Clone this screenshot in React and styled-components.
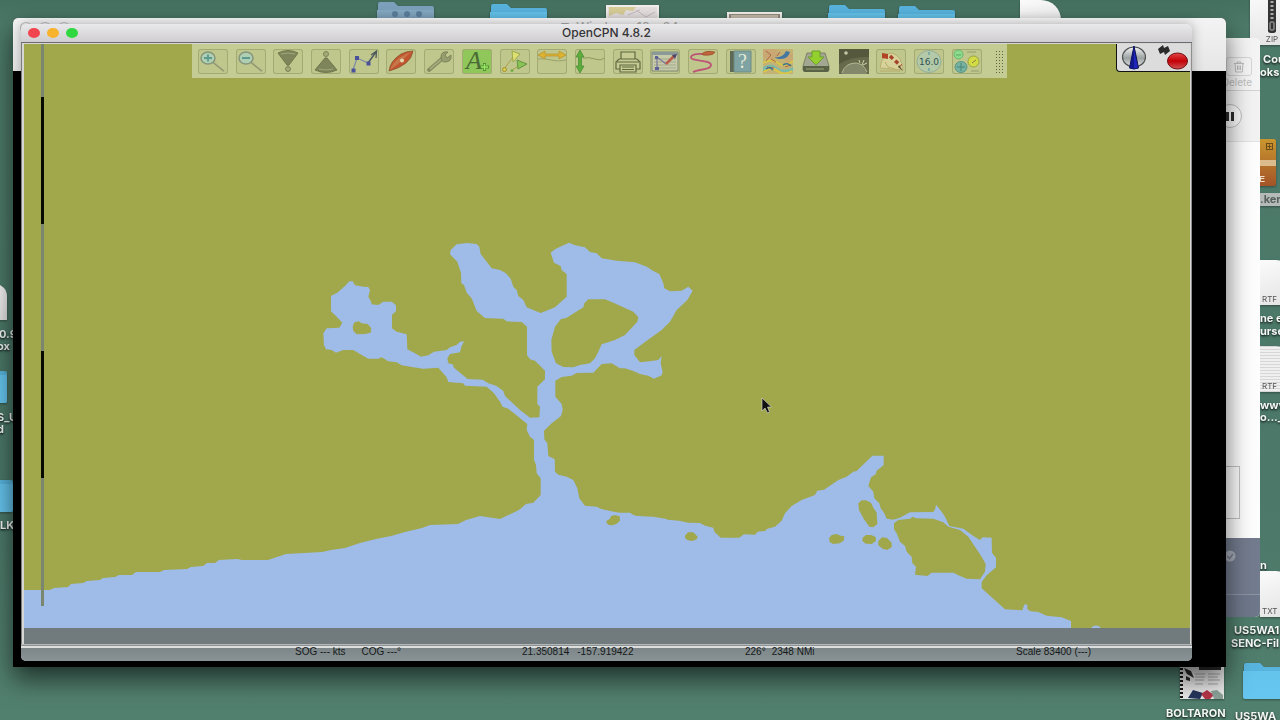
import React from 'react'
import styled, { createGlobalStyle, css } from 'styled-components'

const TOOLS = [
  { name: 'Zoom in', icon: <ZoomIcon plus /> },
  { name: 'Zoom out', icon: <ZoomIcon /> },
  { name: 'Larger scale chart', icon: <ScaleInIcon /> },
  { name: 'Smaller scale chart', icon: <ScaleOutIcon /> },
  { name: 'Create route', icon: <RouteIcon /> },
  { name: 'Auto follow', icon: <BoatIcon /> },
  { name: 'Options', icon: <WrenchIcon /> },
  { name: 'Show ENC text', icon: <TextIcon />, active: true },
  { name: 'Show AIS targets', icon: <AisIcon /> },
  { name: 'Show currents', icon: <CurrentsIcon /> },
  { name: 'Show tides', icon: <TidesIcon /> },
  { name: 'Print chart', icon: <PrintIcon /> },
  { name: 'Route manager', icon: <ManagerIcon /> },
  { name: 'Toggle tracking', icon: <TrackIcon /> },
  { name: 'About OpenCPN', icon: <HelpIcon /> },
  { name: 'GRIB weather', icon: <WeatherIcon />, bare: true },
  { name: 'Chart downloader', icon: <DownloadIcon />, bare: true },
  { name: 'Celestial navigation', icon: <PlanetIcon />, bare: true },
  { name: 'World magnetic map', icon: <DraftIcon /> },
  { name: 'Variation', icon: <VariationIcon /> },
  { name: 'Dashboard', icon: <DashboardIcon /> },
]

const App = () => {
  return (
    <>
      <GlobalStyle />
      <Desktop>
        <Shortcuts />
        <MailWindow />
        <MachineWindow>
          <MachineTitle>
            <Lights>
              <GhostLight />
              <GhostLight />
              <GhostLight />
            </Lights>
            <MachineName>
              <svg width="12" height="12" viewBox="0 0 12 12" fill="none" stroke="#a9a9a9">
                <path d="M1.500 2.500h7v8h-7zM3.500 4.500h7v6" />
              </svg>
              Windows 10 x64
            </MachineName>
          </MachineTitle>
          <MachineScreen />
        </MachineWindow>
        <MainWindow>
          <TitleBar>
            <Lights>
              <Light $color="#f0444e" aria-label="Close" />
              <Light $color="#f8b32d" aria-label="Minimize" />
              <Light $color="#2fd840" aria-label="Zoom" />
            </Lights>
            <Title>OpenCPN 4.8.2</Title>
          </TitleBar>
          <Frame>
            <Chart>
              <ChartDrawing />
              <ScaleBar>
                <ScaleStep $size={53} />
                <ScaleStep $size={127} $dark />
                <ScaleStep $size={127} />
                <ScaleStep $size={127} $dark />
                <ScaleStep $size={128} />
              </ScaleBar>
              <Toolbar>
                <ToolList>
                  {TOOLS.map((tool) => (
                    <ToolButton key={tool.name} aria-label={tool.name} $active={tool.active} $bare={tool.bare}>
                      {tool.icon}
                    </ToolButton>
                  ))}
                </ToolList>
                <Grip />
              </Toolbar>
              <CompassPanel>
                <CompassIcon />
                <GpsIcon />
              </CompassPanel>
            </Chart>
            <ChartStrip />
          </Frame>
          <StatusBar>
            <StatusField />
            <StatusField $gap={16}>
              <span>SOG --- kts</span>
              <span>COG ---°</span>
            </StatusField>
            <StatusField $gap={8}>
              <span>21.350814</span>
              <span>-157.919422</span>
            </StatusField>
            <StatusField $gap={6}>
              <span>226°</span>
              <span>2348 NMi</span>
            </StatusField>
            <StatusField>
              <span>Scale 83400 (---)</span>
            </StatusField>
          </StatusBar>
        </MainWindow>
      </Desktop>
    </>
  )
}

export default App

/* Desktop */

function Shortcuts() {
  return (
    <>
      <Item $x={377} $y={1}><FolderIcon group /></Item>
      <Item $x={490} $y={3}><FolderIcon /></Item>
      <Item $x={606} $y={5}><MapThumb /></Item>
      <Item $x={727} $y={12}><PhotoThumb /></Item>
      <RightItem $x={452} $y={4}><FolderIcon /></RightItem>
      <RightItem $x={382} $y={5}><FolderIcon /></RightItem>
      <RightItem $x={260} $y={0}><Sheet $w={41} $h={50} $fold={20} /></RightItem>

      <RightItem $x={30} $y={-8}><Sheet $w={44} $h={53}><ZipPull /><Kind>ZIP</Kind></Sheet></RightItem>
      <RightItem $x={17} $y={53}><Label>Cou</Label></RightItem>
      <RightItem $x={20} $y={66}><Label>oks</Label></RightItem>
      <RightItem $x={30} $y={139}><BoxIcon /></RightItem>
      <RightItem $x={20} $y={193}><Label $selected>.ker</Label></RightItem>
      <RightItem $x={20} $y={260}><Sheet $w={36} $h={45} $fold={20}><Kind>RTF</Kind></Sheet></RightItem>
      <RightItem $x={20} $y={312}><Label>ne e</Label></RightItem>
      <RightItem $x={20} $y={325}><Label>urse</Label></RightItem>
      <RightItem $x={20} $y={346}><Sheet $w={36} $h={46} $fold={20} $lined><Kind>RTF</Kind></Sheet></RightItem>
      <RightItem $x={20} $y={399}><Label>www</Label></RightItem>
      <RightItem $x={20} $y={411}><Label>o..._5</Label></RightItem>
      <RightItem $x={20} $y={559}><Label>n</Label></RightItem>
      <RightItem $x={20} $y={571}><Sheet $w={36} $h={46} $fold={20}><Kind>TXT</Kind></Sheet></RightItem>
      <RightItem $x={46} $y={624}><Label>US5WA1</Label></RightItem>
      <RightItem $x={49} $y={637}><Label>SENC-Fil</Label></RightItem>
      <RightItem $x={101} $y={660}><CatalogThumb /></RightItem>
      <RightItem $x={37} $y={662}><FolderIcon /></RightItem>
      <RightItem $x={114} $y={707}><Label>BOLTARON</Label></RightItem>
      <RightItem $x={45} $y={710}><Label>US5WA</Label></RightItem>

      <Item $x={-34} $y={284}><Sheet $w={41} $h={36} $fold={12} /></Item>
      <Item $x={-1} $y={328}><Label>0.9</Label></Item>
      <Item $x={-3} $y={340}><Label>ox</Label></Item>
      <Item $x={-50} $y={366}><FolderIcon /></Item>
      <Item $x={-3} $y={411}><Label>S_U</Label></Item>
      <Item $x={-3} $y={423}><Label>d</Label></Item>
      <Item $x={-44} $y={475}><FolderIcon /></Item>
      <Item $x={0} $y={519}><Label>LK</Label></Item>
    </>
  )
}

function MailWindow() {
  return (
    <Mail>
      <MailTools>
        <DeleteButton>
          <DeleteBox>
            <svg width="12" height="12" viewBox="0 0 12 12" fill="none" stroke="#bcbcbc">
              <path d="M1 2.500h10M4 2.500V1h4v1.500M2 2.500l.7 8.500h6.600L10 2.500M4.500 4.500v4.500M6 4.500v4.500M7.500 4.500v4.500" />
            </svg>
          </DeleteBox>
          Delete
        </DeleteButton>
      </MailTools>
      <MailActivity>
        <PauseButton aria-label="Pause">
          <svg width="22" height="22" viewBox="0 0 22 22">
            <path d="M7 7h3v9H7zM12 7h3v9h-3z" fill="#2c2c2c" />
          </svg>
        </PauseButton>
      </MailActivity>
      <MailBody>
        <MailBox />
      </MailBody>
      <MailFooter>
        <svg width="12" height="12" viewBox="0 0 12 12">
          <circle cx="6" cy="6" r="5.500" fill="#a9adb8" />
          <path d="M3 6l2.500 2.500L9 4" fill="none" stroke="#777e90" strokeWidth="1.500" />
        </svg>
      </MailFooter>
      <MailBase />
    </Mail>
  )
}

function FolderIcon({ group }) {
  const id = group ? 'folderGroup' : 'folderPlain'
  return (
    <svg width="58" height="38" viewBox="0 0 58 38">
      <defs>
        <linearGradient id={id} x1="0" y1="0" x2="0" y2="1">
          <stop offset="0" stopColor={group ? '#86abc4' : '#64c4ec'} />
          <stop offset="1" stopColor={group ? '#7298b4' : '#66c6f0'} />
        </linearGradient>
      </defs>
      <path d="M1 8V3q0-2 2-2h14l4 4h34q2 0 2 2v28q0 2-2 2H3q-2 0-2-2z" fill={group ? '#7da2bd' : '#58b4de'} />
      <path d="M0 9h57v26q0 2-2 2H2q-2 0-2-2z" fill={`url(#${id})`} />
      {group && (
        <g fill="#5e819f">
          <circle cx="18" cy="13" r="3" /><circle cx="30" cy="13" r="3" /><circle cx="42" cy="13" r="3" />
        </g>
      )}
    </svg>
  )
}

function MapThumb() {
  return (
    <svg width="54" height="40" viewBox="0 0 54 40">
      <path fill="#f2efec" d="M0 0h53v40H0z" />
      <path fill="#e7e1e2" d="M2 2h49v38H2z" />
      <path fill="#d9cf98" d="M3 2h27l-3 4-7-1-3 5-7-2-7 3z" />
      <path d="M22 10l12-5M30 5l10 7 9-5" stroke="#c9bdc3" fill="none" />
    </svg>
  )
}

function PhotoThumb() {
  return (
    <svg width="55" height="20" viewBox="0 0 55 20">
      <path fill="#f4f3f0" d="M0 0h55v20H0z" />
      <path fill="#978d81" d="M2 2h51v18H2z" />
      <path fill="#c8beae" d="M4 3h47v17H4z" />
    </svg>
  )
}

function CatalogThumb() {
  return (
    <svg width="46" height="40" viewBox="0 0 46 40">
      <path fill="#e9e9ea" d="M1 0h44v39H1z" />
      <path fill="none" stroke="#161616" strokeWidth="3" strokeDasharray="2 2" d="M2.500 0v39" />
      <path fill="#2b2b2b" d="M20 6h22v4H20zM5 8l7 3 3 7-7-4zM7 16l4 2v3l-4-1z" />
      <path stroke="#a8a8aa" d="M16 14h10M16 17h10M16 20h9M29 14h12M29 17h10M29 20h12M16 24h8M29 24h10" />
      <path fill="#26355c" d="M9 38l5-8 10 3-3 6z" />
      <path fill="#b53649" d="M22 34l6-4 7 5-4 4h-5z" />
      <path fill="#8ba197" d="M32 31l6-1 6 5v4h-9z" />
    </svg>
  )
}

function ZipPull() {
  return (
    <svg width="18" height="34" viewBox="0 0 18 34">
      <path d="M5 0h8v31q0 2-4 2t-4-2z" fill="#343434" />
      <path d="M9 1v18" stroke="#aaa" strokeWidth="3" strokeDasharray="2 2" />
      <rect x="7" y="22" width="4" height="8" rx="1" fill="none" stroke="#b5b5b5" />
    </svg>
  )
}

function BoxIcon() {
  return (
    <svg width="27" height="48" viewBox="0 0 27 48">
      <defs>
        <linearGradient id="box" x1="0" y1="0" x2="0" y2="1">
          <stop offset="0" stopColor="#c9962f" />
          <stop offset="1" stopColor="#a45427" />
        </linearGradient>
      </defs>
      <rect width="26" height="47" rx="2" fill="url(#box)" />
      <path d="M0 21h26v6H0z" fill="#dcbc8c" />
      <rect x="16.500" y="4.500" width="6" height="6" fill="none" stroke="#6b4b17" />
      <path d="M19.500 5.500v4M17.500 7.500h4" stroke="#6b4b17" />
      <text x="9" y="43" fontFamily="Liberation Sans, sans-serif" fontSize="9" fontWeight="700" fill="#eee0cc">E</text>
    </svg>
  )
}

/* Chart */

function ChartDrawing() {
  return (
    <ChartSvg viewBox="24 44 1166 584" preserveAspectRatio="xMidYMid slice">
      <path fill="#a1a84b" d="M0 0h1400v800H0z" />
      <path
        fill="#9fbbe8"
        d="M24 590H50L54 588L68 587L71 584L83 583L87 581L100 580L103 578L115 577L119 575L132 575L136 572L160 572L164 570L187 569L191 567L203 566L207 563L215 563L219 560L237 559L242 560L268 560L274 558L286 554L322 552L331 550L345 548L360 543L376 539L391 536L405 532L422 528L430 525L458 524L466 520L480 516L500 519L540 500L595 508L620 513L650 518L681 521V700H24z"
      />
      <g transform="translate(300 220) scale(.33333)">
        <path
          fill="#9fbbe8"
          d="M590 900L615 895 640 886 660 868 678 852 700 848 722 825 722 775 710 760 708 735 702 720 702 660 690 650 680 630 682 612 625 566 608 560 600 545 582 520 560 500 495 497 490 490 445 486 440 472 415 443 370 446 340 442 305 436 290 427 265 424 245 412 235 416 205 416 180 402 160 390 130 390 108 398 95 390 78 388 72 375 70 340 80 325 118 323 127 308 110 290 93 274 93 228 112 218 135 198 148 184 158 184 165 196 190 200 205 201 210 210 205 230 212 242 215 253 235 255 250 245 275 245 288 256 288 274 276 284 276 325 290 335 320 343 322 388 345 400 363 410 385 406 402 395 440 390 450 382 470 375 480 365 492 364 484 380 480 397 450 402 442 415 445 430 458 433 462 443 503 477 548 479 565 490 590 498 610 513 615 528 660 570 690 593 718 592 720 560 712 552 712 500 735 478 735 452 705 422 690 418 681 405 681 320 665 306 620 304 610 296 555 294 530 273 515 235 500 218 492 195 484 190 483 158 472 125 450 103 452 90 470 73 500 69 530 72 538 80 542 102 560 125 575 145 600 150 618 160 632 176 640 200 650 210 655 228 670 240 680 262 705 272 722 279 745 270 765 262 800 230 800 162 785 150 782 138 762 128 752 98 765 88 790 76 808 68 825 76 855 82 870 96 890 100 905 115 950 122 1005 127 1040 140 1060 153 1078 162 1090 190 1093 205 1110 214 1145 212 1165 200 1178 212 1162 240 1130 270 1110 305 1085 330 1040 362 1003 390 1003 405 1020 427 1050 424 1075 420 1085 408 1082 430 1088 455 1085 466 1062 476 1045 467 1020 462 1000 453 975 445 960 445 935 430 905 432 880 458 830 459 815 467 785 471 766 482 766 530 785 552 788 570 783 588 755 610 732 632 733 658 742 670 745 708 764 718 765 755 775 764 800 770 820 780 832 805 838 835 855 857 890 860 905 868 950 878 990 878 1005 888 1060 890 1100 897V960H590z"
        />
        <g fill="#a1a84b">
          <path d="M158 320L163 307 177 304 185 310 203 312 214 325 212 338 195 342 170 343 160 333z" />
          <path d="M768 430L755 395 754 360 765 320 782 298 800 293 850 262 853 250 865 238 915 238 940 248 1000 275 1015 292 1012 305 975 345 945 360 905 373 895 395 885 415 870 430 840 435 820 442 790 441z" />
          <path d="M918 904l12-8 3-8 12-3 14 4 1 13-10 9-12 5-14-2z" />
        </g>
      </g>
      <g transform="translate(680 440) scale(.33333)">
        <path
          fill="#9fbbe8"
          d="M0 243L25 248 60 249 75 257 100 263 103 275 122 293 178 293 192 283 225 284 233 275 255 273 262 266 285 260 305 242 315 220 335 198 365 180 405 165 412 152 432 149 475 120 500 110 520 95 530 93 577 47 611 47 611 75 590 92 587 103 573 112 565 138 580 155 583 175 598 190 602 205 612 218 620 236 640 239 660 233 690 217 760 216 766 206 768 194 785 215 795 230 808 258 850 266 880 288 900 300 908 292 935 293 936 338 948 354 948 382 920 406 905 426 905 445 975 508 1027 511 1034 492 1042 495 1042 508 1052 514 1075 516 1100 527 1145 532 1173 543 1175 800H0zM1235 561l8-4h10l8 4v8h-26z"
        />
        <g fill="#a1a84b">
          <path d="M642 250L655 240 690 236 698 230 708 235 760 236 790 247 805 260 840 270 865 290 885 320 905 350 917 372 915 395 900 418 860 416 840 408 820 398 755 398 742 408 705 404 708 380 697 370 695 350 680 335 675 318 660 305 650 280 642 268z" />
          <path d="M535 190L545 181 558 181 573 188 580 203 590 218 592 252 580 262 568 260 552 238 537 210z" />
          <path d="M447 295l8-10 15-3 12 5 11 2-2 13-12 8-20 2-10-6z" />
          <path d="M548 293l10-8 15 0 14 6 1 11-13 10-18-1-10-8z" />
          <path d="M595 303l11-11 15 2 14 14 0 14-14 8-13-4-13-10z" />
          <path d="M15 287l9-10 16 0 13 13-3 8-13 5-14-2-8-7z" />
        </g>
      </g>
      <path d="M762 398v13l3-3 2.500 5 2-1-2-5h4z" fill="#111" stroke="#ddd" strokeWidth=".6" />
    </ChartSvg>
  )
}

/* Tool drawings, all on a 30 x 25 board */

function Board({ children }) {
  return <svg width="30" height="25" viewBox="0 0 30 25" fill="none">{children}</svg>
}

function ZoomIcon({ plus }) {
  return (
    <Board>
      <path d="M15 13l11 9" stroke="#8e956a" strokeWidth="2" />
      <path d="M16 13l10 8" stroke="#c5c9a2" strokeWidth=".8" />
      <ellipse cx="10" cy="9" rx="7" ry="6" fill="#b0cfb2" stroke="#84957a" strokeWidth="1.500" />
      <path d={plus ? 'M6 9h8M10 5.500v7' : 'M6 9h8'} stroke="#5a9a90" strokeWidth="1.800" />
    </Board>
  )
}

function ScaleInIcon() {
  return (
    <Board>
      <path d="M5 4q10-5 20 0l-9 12h-2z" fill="#7e855a" stroke="#70774c" />
      <path d="M8 5q7-2 14 0" stroke="#a0a777" />
      <circle cx="15" cy="20" r="2.500" fill="#a4aa75" stroke="#7c8358" />
      <path d="M15 16v2" stroke="#7c8358" />
    </Board>
  )
}

function ScaleOutIcon() {
  return (
    <Board>
      <circle cx="15" cy="5" r="2.500" fill="#a4aa75" stroke="#7c8358" />
      <path d="M14 9h2l10 12q-11 5-22 0z" fill="#7e855a" stroke="#70774c" />
      <path d="M8 20q7 2 14 0" stroke="#a0a777" />
    </Board>
  )
}

function RouteIcon() {
  return (
    <Board>
      <path d="M4 21L8 9l11 5 8-11" stroke="#7e88a8" strokeWidth="1.200" />
      <path d="M19 14l8-11M22 6l5.500-4-.5 7" stroke="#4c5a5a" strokeWidth="1.300" />
      <path d="M2.500 19.500h4v4h-4zM6 7h4v4H6zM17.500 12.500h4v4h-4z" fill="#4b529b" />
    </Board>
  )
}

function BoatIcon() {
  return (
    <Board>
      <path d="M3 22Q4 12 15 5q6-3 12-3-1 7-7 12-6 5-17 8z" fill="#c2542f" stroke="#8a5831" strokeWidth=".8" />
      <path d="M4 21Q8 9 25 3L12 15z" fill="#c6774a" />
      <circle cx="16" cy="11.500" r="2" fill="#e3d9b0" />
    </Board>
  )
}

function WrenchIcon() {
  return (
    <Board>
      <path d="M5 21L19 9" stroke="#868d61" strokeWidth="4" strokeLinecap="round" />
      <path d="M6 20L19 9" stroke="#abb182" strokeWidth="1.500" />
      <path d="M17 8q0-6 7-5l-3 3 2 3 4-3q1 7-6 7-4 0-4-5z" fill="#969d6e" stroke="#7d8459" />
    </Board>
  )
}

function TextIcon() {
  return (
    <Board>
      <text x="4" y="20" fontFamily="Liberation Serif, serif" fontStyle="italic" fontSize="26" fill="#4a6b35">A</text>
      <path d="M22.500 14v8M18 18h9" stroke="#4f912e" strokeWidth="3" />
      <path d="M22.500 15v6M19 18h7" stroke="#9be569" strokeWidth="1.500" />
    </Board>
  )
}

function AisIcon() {
  return (
    <Board>
      <path d="M4 20L13 8M12 21l8-5" stroke="#a8a04c" />
      <path d="M12 2l8 3-7 8z" fill="#dde070" stroke="#9ca84c" />
      <path d="M17 11l10 4-9 5z" fill="#89c255" stroke="#649540" />
      <circle cx="4.500" cy="20.500" r="2" fill="#dace49" stroke="#a49034" />
      <circle cx="12" cy="21.500" r="1.500" fill="#78ad46" />
    </Board>
  )
}

function CurrentsIcon() {
  return (
    <Board>
      <path d="M1 10q6-1 13 1t15 0" stroke="#9aa26c" />
      <path d="M1 6l7-4v3h14V2l7 4-7 4V7H8v3z" fill="#dcb331" stroke="#b99431" strokeWidth=".8" />
    </Board>
  )
}

function TidesIcon() {
  return (
    <Board>
      <path d="M8 9q6-1 12 1t9-1" stroke="#8f975f" />
      <path d="M5 1l4 7H6.500v9H9l-4 7-4-7h2.500V8H1z" fill="#5cab3b" stroke="#4c8f38" strokeWidth=".8" />
    </Board>
  )
}

function PrintIcon() {
  return (
    <Board>
      <g fill="#c5cb92" stroke="#616840" strokeWidth="1.200">
        <path d="M8 10V3h14v7M6 10h18l3 3v7H3v-7z" />
        <path d="M7 16h16v7H7z" />
        <path d="M9 18h12M9 20.500h12M4 13h22" />
      </g>
    </Board>
  )
}

function ManagerIcon() {
  return (
    <Board>
      <path d="M2 3h26v19H2z" fill="#c8cbaa" stroke="#7d8670" />
      <path d="M2 3h26v3H2z" fill="#899a98" />
      <path d="M4 10h22M4 13h22M4 16h22M4 19h22" stroke="#a3a98f" />
      <path d="M7 20V8l9 7" stroke="#7b7a9b" strokeWidth="1.200" />
      <path d="M16 15l8-8" stroke="#bc5b4b" strokeWidth="2.500" />
      <path d="M22 6l5-1-2 5z" fill="#4e456b" />
      <path d="M5 18h4v3H5zM5 7h3v3H5z" fill="#5c6294" />
    </Board>
  )
}

function TrackIcon() {
  return (
    <Board>
      <path d="M16 5Q4 4 3 8c-1 5 20 2 20 8 0 5-12 4-18 7" stroke="#bd5577" strokeWidth="1.800" />
      <path d="M14 5q3-4 13-2-2 4-12 3z" fill="#c26439" stroke="#914b29" strokeWidth=".7" />
    </Board>
  )
}

function HelpIcon() {
  return (
    <Board>
      <path d="M4 2h4v21H4z" fill="#5f6a56" />
      <path d="M8 2h17v21H8z" fill="#7fa3a2" stroke="#6f8a82" />
      <text x="12" y="19" fontFamily="Liberation Serif, serif" fontSize="20" fill="#e4ead6">?</text>
    </Board>
  )
}

function WeatherIcon() {
  return (
    <Board>
      <path d="M0 0h30v25H0z" fill="#c3b273" />
      <path d="M0 0h12l5 6-8 5-9-3zM21 8l9-4v8l-6 3z" fill="#c9a873" />
      <path d="M12 8q8 1 11-6l4 1q-2 7-9 7-5 0-6-2z" fill="#4577a0" />
      <path d="M0 18q8-5 14 0t16 0v4q-8 4-14-1t-16 1z" fill="#7dbba8" />
      <path d="M0 14q9-5 15 0t15-2M1 23q6-6 13-1t15 0" stroke="#d8c748" strokeWidth="2" />
      <path d="M3 2l5 4-5 6M17 3l-3 4M22 18l6-2M4 18l7 1M8 10l5 3" stroke="#b0644a" />
      <path d="M20 16q5-3 8 1M3 20q4-3 7 1" stroke="#3e7393" strokeWidth="1.500" />
    </Board>
  )
}

function DownloadIcon() {
  return (
    <Board>
      <path d="M6 4h18l4 13v4q0 1-2 1H4q-2 0-2-1v-4z" fill="#a3a792" stroke="#7b8263" />
      <path d="M2 17h26v4q0 2-2 2H4q-2 0-2-2z" fill="#5a6245" />
      <path d="M5 20h18" stroke="#9ba47a" />
      <path d="M11 2h8v6h4l-8 8-8-8h4z" fill="#93d02d" stroke="#6c9f2b" />
    </Board>
  )
}

function PlanetIcon() {
  return (
    <Board>
      <path d="M0 0h30v25H0z" fill="#55583c" />
      <path d="M0 15q13-8 30-7v17H0z" fill="#686b4b" />
      <path d="M3 25Q5 15 16 14q10 1 12 11z" fill="#84886a" />
      <path d="M3 24Q6 14 17 14q8 1 11 9" stroke="#b4b793" />
      <path d="M23 16l2-5M24 16l4-2M21 14l-1-3" stroke="#d0d2ab" />
      <circle cx="7" cy="4" r="1.800" fill="#c5c6a5" />
    </Board>
  )
}

function DraftIcon() {
  return (
    <Board>
      <path d="M4 19Q6 4 16 4q10 3 11 17z" fill="#d6d29a" stroke="#b9ae70" />
      <path d="M6 4l6 1v5l-6-1z" fill="#b04425" />
      <path d="M14 7l11 10" stroke="#a8432b" strokeWidth="3.500" strokeDasharray="4 3" />
      <path d="M4 22h20M9 13l3 5 7 2" stroke="#b9ab68" />
      <path d="M23 16l4 6-5-4z" fill="#594b2e" />
    </Board>
  )
}

function VariationIcon() {
  return (
    <Board>
      <ellipse cx="15" cy="12.500" rx="12" ry="11" fill="#b4c9a8" stroke="#94ad97" />
      <path d="M15 3v3M15 19v3" stroke="#6ba3a6" strokeWidth="1.500" />
      <text x="15" y="16" textAnchor="middle" fontFamily="DejaVu Sans, sans-serif" fontSize="9" fill="#2d5353">16.0</text>
    </Board>
  )
}

function DashboardIcon() {
  return (
    <Board>
      <circle cx="6.500" cy="5.500" r="4.500" fill="#8bdc8a" stroke="#66b570" />
      <path d="M4 6h5" stroke="#63a56b" />
      <ellipse cx="21.500" cy="12.500" rx="5.500" ry="5.500" fill="#d4dc45" stroke="#96a23e" />
      <path d="M20 14l4-3" stroke="#848237" />
      <ellipse cx="9" cy="18" rx="6" ry="5.500" fill="#77b2a0" stroke="#5a9486" />
      <path d="M9 14v8M5 18h8" stroke="#47857b" />
      <path d="M15 3h9M19 22h8" stroke="#aab17c" strokeWidth="2" />
    </Board>
  )
}

function CompassIcon() {
  return (
    <svg width="26" height="26" viewBox="0 0 26 26">
      <defs>
        <linearGradient id="dial" x1="0" y1="0" x2="0" y2="1">
          <stop offset="0" stopColor="#f5f5f5" />
          <stop offset=".55" stopColor="#9ba1a1" />
          <stop offset="1" stopColor="#e6e6e6" />
        </linearGradient>
      </defs>
      <ellipse cx="13" cy="13" rx="11.500" ry="10" fill="url(#dial)" stroke="#4d5151" strokeWidth="1.200" />
      <path d="M13 2L8.500 24q4.500 2 9 0z" fill="#2025bb" stroke="#0b1257" />
      <path d="M13 2v23l-4-1z" fill="#10188a" />
    </svg>
  )
}

function GpsIcon() {
  return (
    <svg width="32" height="26" viewBox="0 0 32 26">
      <defs>
        <linearGradient id="fix" x1="0" y1="0" x2="0" y2="1">
          <stop offset="0" stopColor="#e44848" />
          <stop offset=".5" stopColor="#c30008" />
          <stop offset="1" stopColor="#d05555" />
        </linearGradient>
      </defs>
      <path d="M1 5l5-4 1 3 4-2 2 5-5 4-1-3-4 2z" fill="#2a2a2a" />
      <ellipse cx="20.500" cy="17" rx="10" ry="8" fill="url(#fix)" stroke="#6f1114" />
    </svg>
  )
}

const GlobalStyle = createGlobalStyle`
  * {
    box-sizing: border-box;
  }
  body {
    margin: 0;
    overflow: hidden;
    font-family: Inter, 'Liberation Sans', sans-serif;
  }
  button {
    padding: 0;
    border: 0;
    background: none;
    font: inherit;
  }
  svg {
    display: block;
    flex: none;
  }
`
const Desktop = styled.main`
  position: relative;
  height: 100vh;
  overflow: hidden;
  background: linear-gradient(#45705f, #4c7a69 24px, #4b7868 70%, #52806f);
`
const Item = styled.div`
  position: absolute;
  left: ${(props) => props.$x}px;
  top: ${(props) => props.$y}px;
  filter: drop-shadow(0 1px 1px rgba(0, 0, 0, 0.35));
`
const RightItem = styled(Item)`
  left: calc(100% - ${(props) => props.$x}px);
`
const Label = styled.span`
  display: block;
  font-size: 11px;
  line-height: 13px;
  font-weight: 700;
  white-space: nowrap;
  color: #f2f6f4;
  text-shadow: 0 1px 2px rgba(0, 0, 0, 0.6);
  ${(props) => props.$selected && css`
    color: #56605c;
    background: #b4bab7;
    text-shadow: none;
  `}
`
const Sheet = styled.div`
  width: ${(props) => props.$w}px;
  height: ${(props) => props.$h}px;
  display: flex;
  flex-direction: column;
  justify-content: flex-end;
  align-items: ${(props) => (props.$fold ? 'flex-start' : 'center')};
  border-top-right-radius: ${(props) => props.$fold || 0}px;
  background: ${(props) => (props.$lined
    ? 'repeating-linear-gradient(#d6d6d6 0 1px, #efefef 1px 3px)'
    : 'linear-gradient(160deg, #fbfbfb, #e2e2e2)')};
`
const Kind = styled.span`
  padding: 0 2px;
  font-size: 8px;
  line-height: 11px;
  color: #555;
`
const Window = styled.section`
  position: absolute;
  display: flex;
  flex-direction: column;
`
const Mail = styled(Window)`
  inset: 38px 20px 103px 40%;
  border-radius: 5px;
  overflow: hidden;
  background: #fdfdfd;
`
const MailTools = styled.div`
  height: 53px;
  display: flex;
  justify-content: flex-end;
  padding: 19px 8px 0 0;
  background: #f4f4f4;
  border-bottom: 1px solid #d2d2d2;
`
const DeleteButton = styled.button`
  display: flex;
  flex-direction: column;
  align-items: flex-end;
  font-size: 10px;
  line-height: 12px;
  color: #bebebe;
`
const DeleteBox = styled.span`
  width: 26px;
  height: 19px;
  display: flex;
  align-items: center;
  justify-content: center;
  border: 1px solid #d5d5d5;
  border-radius: 3px;
`
const MailActivity = styled.div`
  height: 51px;
  display: flex;
  align-items: center;
  justify-content: flex-end;
  padding-right: 18px;
  background: #f2f2f2;
  border-bottom: 1px solid #e2e2e2;
`
const PauseButton = styled.button`
  border: 1px solid #bdbdbd;
  border-radius: 50%;
  background: #fafafa;
`
const MailBody = styled.div`
  flex: 1;
  display: flex;
  align-items: flex-end;
  justify-content: flex-end;
  padding: 0 20px 19px 0;
`
const MailBox = styled.div`
  width: 80px;
  height: 53px;
  border: 1px solid #c2c2c2;
`
const MailFooter = styled.div`
  height: 56px;
  display: flex;
  justify-content: flex-end;
  padding: 12px 24px 0 0;
  background: #737b8e;
`
const MailBase = styled.div`
  height: 23px;
  background: #6f788b;
  border-top: 1px solid #8c93a3;
`
const MachineWindow = styled(Window)`
  inset: 18px 54px 53px 13px;
  border-radius: 5px 5px 0 0;
  background: #000;
  box-shadow: 0 12px 26px rgba(0, 0, 0, 0.6);
`
const MachineTitle = styled.div`
  height: 53px;
  display: grid;
  grid-template-columns: 1fr auto 1fr;
  align-items: start;
  padding-top: 1px;
  border-radius: 5px 5px 0 0;
  background: linear-gradient(#f3f3f3, #e6e6e6);
`
const MachineName = styled.span`
  display: flex;
  align-items: center;
  gap: 4px;
  font-size: 13px;
  line-height: 16px;
  color: #a9a9a9;
`
const MachineScreen = styled.div`
  flex: 1;
  background: #000;
`
const MainWindow = styled(Window)`
  inset: 24px 88px 59px 21px;
  border-radius: 5px;
  overflow: hidden;
  background: #cbcbcb;
  box-shadow: 0 0 12px rgba(0, 0, 0, 0.3);
`
const TitleBar = styled.header`
  height: 19px;
  display: grid;
  grid-template-columns: 1fr auto 1fr;
  align-items: center;
  background: linear-gradient(#e9e8ea, #cfcdd1);
  border-bottom: 1px solid #6c6b6e;
`
const Lights = styled.div`
  display: flex;
  gap: 7px;
  padding-left: 7px;
`
const Light = styled.button`
  width: 12px;
  height: 10px;
  border-radius: 50%;
  background: ${(props) => props.$color};
`
const GhostLight = styled.span`
  width: 12px;
  height: 11px;
  margin-top: 3px;
  border: 1px solid #bdbdbd;
  border-radius: 50%;
`
const Title = styled.h1`
  margin: 0;
  font-size: 12px;
  line-height: 18px;
  font-weight: 500;
  color: #343336;
`
const Frame = styled.div`
  flex: 1;
  min-height: 0;
  display: flex;
  flex-direction: column;
  padding: 1px 1px 0 2px;
  border-left: 1px solid #7d7d7d;
  border-right: 1px solid #8f8f8f;
  background: #d6d6d4;
`
const Chart = styled.div`
  position: relative;
  flex: 1;
  min-height: 0;
  overflow: hidden;
`
const ChartSvg = styled.svg`
  width: 100%;
  height: 100%;
`
const ChartStrip = styled.div`
  height: 16px;
  background: #717b7e;
`
const ScaleBar = styled.div`
  position: absolute;
  top: 0;
  left: 17px;
  width: 3px;
`
const ScaleStep = styled.div`
  height: ${(props) => props.$size}px;
  background: ${(props) => (props.$dark ? '#080a04' : '#7b866f')};
`
const Toolbar = styled.nav`
  position: absolute;
  top: 0;
  left: 168px;
  display: flex;
  align-items: center;
  gap: 13px;
  height: 34px;
  padding: 0 3px 0 6px;
  background: #c4cb93;
`
const ToolList = styled.div`
  width: 784px;
  display: flex;
  justify-content: space-between;
`
const ToolButton = styled.button`
  width: 30px;
  height: 25px;
  border-radius: 3px;
  background: ${(props) => (props.$active ? '#8fc75b' : props.$bare ? 'none' : '#c0c78d')};
  box-shadow: ${(props) => (props.$bare ? 'none' : 'inset 0 0 0 1px #a3aa74')};
`
const Grip = styled.span`
  width: 9px;
  height: 23px;
  background: radial-gradient(circle, #5c643c 1px, transparent 1px) 0 0 / 3px 3px;
`
const CompassPanel = styled.div`
  position: absolute;
  top: 0;
  right: 0;
  display: flex;
  justify-content: space-between;
  width: 74px;
  height: 28px;
  padding: 0 1px 0 4px;
  background: #dcdcdc;
  border: solid #111;
  border-width: 0 0 1px 1px;
  border-bottom-left-radius: 4px;
`
const StatusBar = styled.footer`
  height: 17px;
  display: grid;
  grid-template-columns: 274fr 227fr 223fr 271fr 176fr;
  align-items: start;
  padding-top: 1px;
  border-top: 1px solid #b4b8b8;
  background: linear-gradient(#8c9293 1px, #dcdede 1px, #dcdede 3px, #7c8688 3px, #8a9496);
`
const StatusField = styled.div`
  display: flex;
  gap: ${(props) => props.$gap || 0}px;
  min-width: 0;
  font-family: 'Liberation Sans', Arial, sans-serif;
  font-size: 10px;
  line-height: 12px;
  white-space: nowrap;
  color: #16191a;
`
